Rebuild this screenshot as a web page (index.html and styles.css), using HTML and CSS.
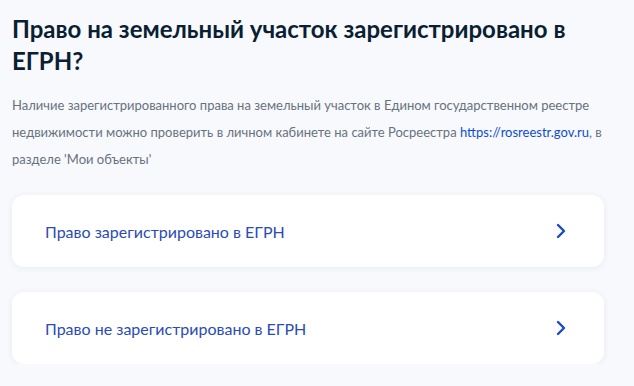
FILE: index.html
```html
<!DOCTYPE html>
<html lang="ru">
<head>
  <meta charset="UTF-8">
  <title>Право на земельный участок</title>
  <link rel="stylesheet" href="styles.css">
</head>
<body>
  <div class="page">
    <h1>Право на земельный участок зарегистрировано в ЕГРН?</h1>
    <p class="hint">
      Наличие зарегистрированного права на земельный участок в Едином государственном реестре
      недвижимости можно проверить в личном кабинете на сайте Росреестра
      <a href="#">https://rosreestr.gov.ru</a>, в разделе 'Мои объекты'
    </p>

    <div class="options">
      <a class="option" href="#">
        <span>Право зарегистрировано в ЕГРН</span>
        <svg class="arrow" width="12" height="16" viewBox="0 0 12 16">
          <path d="M3 2 L9 8 L3 14" fill="none" stroke="#1d48c4" stroke-width="2.4" stroke-linecap="round" stroke-linejoin="round"/>
        </svg>
      </a>
      <a class="option" href="#">
        <span>Право не зарегистрировано в ЕГРН</span>
        <svg class="arrow" width="12" height="16" viewBox="0 0 12 16">
          <path d="M3 2 L9 8 L3 14" fill="none" stroke="#1d48c4" stroke-width="2.4" stroke-linecap="round" stroke-linejoin="round"/>
        </svg>
      </a>
    </div>
  </div>
</body>
</html>
```

FILE: styles.css
```css
body {
  margin: 0;
  background: #f8f9fc;
  font-family: Lato, "Noto Sans", sans-serif;
}
.page {
  padding: 13px 30px 0 12px;
}
h1 {
  margin: 0;
  font-size: 24px;
  line-height: 32px;
  font-weight: 700;
  color: #0b1f33;
}
.hint {
  margin: 15px 0 0;
  font-size: 13px;
  line-height: 27px;
  color: #66727f;
}
.hint a {
  color: #0d4cd3;
  text-decoration: none;
}
.options {
  display: flex;
  flex-direction: column;
  gap: 25px;
  margin-top: 22px;
}
.option {
  display: flex;
  align-items: center;
  justify-content: space-between;
  height: 72px;
  padding: 0 37px 0 33px;
  background: #fff;
  border-radius: 12px;
  box-shadow: 0 1px 6px rgba(40, 70, 150, 0.08);
  text-decoration: none;
  color: #2a4bb8;
  font-size: 16px;
}
.arrow {
  display: block;
}
```
